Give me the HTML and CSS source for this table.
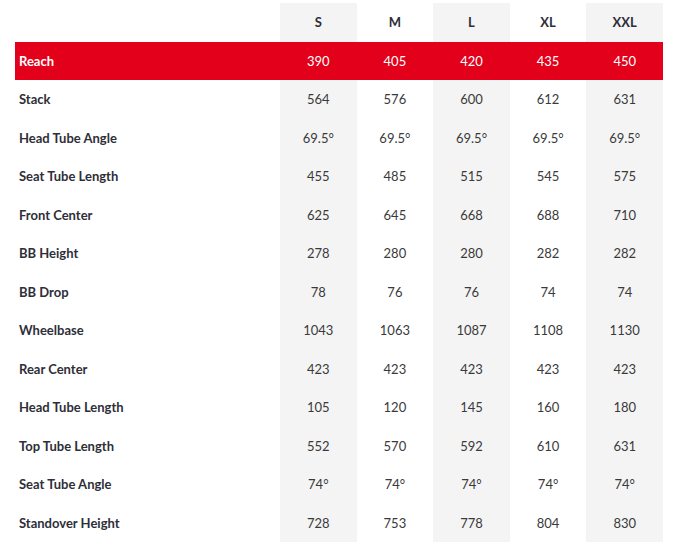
FILE: index.html
```html
<!DOCTYPE html>
<html lang="en">
<head>
<meta charset="utf-8">
<title>Geometry</title>
<link rel="stylesheet" href="styles.css">
</head>
<body>
<div class="geo">
  <div class="row head">
    <div class="cell label"></div>
    <div class="cell">S</div><div class="cell">M</div><div class="cell">L</div><div class="cell">XL</div><div class="cell">XXL</div>
  </div>
  <div class="row hl">
    <div class="cell label">Reach</div>
    <div class="cell">390</div><div class="cell">405</div><div class="cell">420</div><div class="cell">435</div><div class="cell">450</div>
  </div>
  <div class="row">
    <div class="cell label">Stack</div>
    <div class="cell">564</div><div class="cell">576</div><div class="cell">600</div><div class="cell">612</div><div class="cell">631</div>
  </div>
  <div class="row">
    <div class="cell label">Head Tube Angle</div>
    <div class="cell">69.5°</div><div class="cell">69.5°</div><div class="cell">69.5°</div><div class="cell">69.5°</div><div class="cell">69.5°</div>
  </div>
  <div class="row">
    <div class="cell label">Seat Tube Length</div>
    <div class="cell">455</div><div class="cell">485</div><div class="cell">515</div><div class="cell">545</div><div class="cell">575</div>
  </div>
  <div class="row">
    <div class="cell label">Front Center</div>
    <div class="cell">625</div><div class="cell">645</div><div class="cell">668</div><div class="cell">688</div><div class="cell">710</div>
  </div>
  <div class="row">
    <div class="cell label">BB Height</div>
    <div class="cell">278</div><div class="cell">280</div><div class="cell">280</div><div class="cell">282</div><div class="cell">282</div>
  </div>
  <div class="row">
    <div class="cell label">BB Drop</div>
    <div class="cell">78</div><div class="cell">76</div><div class="cell">76</div><div class="cell">74</div><div class="cell">74</div>
  </div>
  <div class="row">
    <div class="cell label">Wheelbase</div>
    <div class="cell">1043</div><div class="cell">1063</div><div class="cell">1087</div><div class="cell">1108</div><div class="cell">1130</div>
  </div>
  <div class="row">
    <div class="cell label">Rear Center</div>
    <div class="cell">423</div><div class="cell">423</div><div class="cell">423</div><div class="cell">423</div><div class="cell">423</div>
  </div>
  <div class="row">
    <div class="cell label">Head Tube Length</div>
    <div class="cell">105</div><div class="cell">120</div><div class="cell">145</div><div class="cell">160</div><div class="cell">180</div>
  </div>
  <div class="row">
    <div class="cell label">Top Tube Length</div>
    <div class="cell">552</div><div class="cell">570</div><div class="cell">592</div><div class="cell">610</div><div class="cell">631</div>
  </div>
  <div class="row">
    <div class="cell label">Seat Tube Angle</div>
    <div class="cell">74°</div><div class="cell">74°</div><div class="cell">74°</div><div class="cell">74°</div><div class="cell">74°</div>
  </div>
  <div class="row">
    <div class="cell label">Standover Height</div>
    <div class="cell">728</div><div class="cell">753</div><div class="cell">778</div><div class="cell">804</div><div class="cell">830</div>
  </div>
</div>
</body>
</html>
```
FILE: styles.css
```css
html, body {
  margin: 0;
  background: #ffffff;
}
body {
  font-family: "Lato", "Liberation Sans", sans-serif;
  font-size: 13px;
  color: #3a3a3a;
}
.geo {
  width: 648px;
  padding: 3px 0 0 15px;
}
.row {
  display: grid;
  grid-template-columns: 265px repeat(5, 1fr);
  height: 38.5px;
}
.cell {
  display: flex;
  align-items: center;
  justify-content: center;
}
.cell:nth-child(2),
.cell:nth-child(4),
.cell:nth-child(6) {
  background: #f4f4f4;
}
.label {
  justify-content: flex-start;
  padding-left: 4px;
  font-weight: 700;
  color: #2e2e38;
}
.head .cell {
  font-weight: 700;
  color: #2e2e38;
}
.row.hl {
  background: #e2001a;
}
.row.hl .cell {
  background: #e2001a;
  color: #ffffff;
  font-weight: 400;
}
.row.hl .label {
  font-weight: 700;
}
```
